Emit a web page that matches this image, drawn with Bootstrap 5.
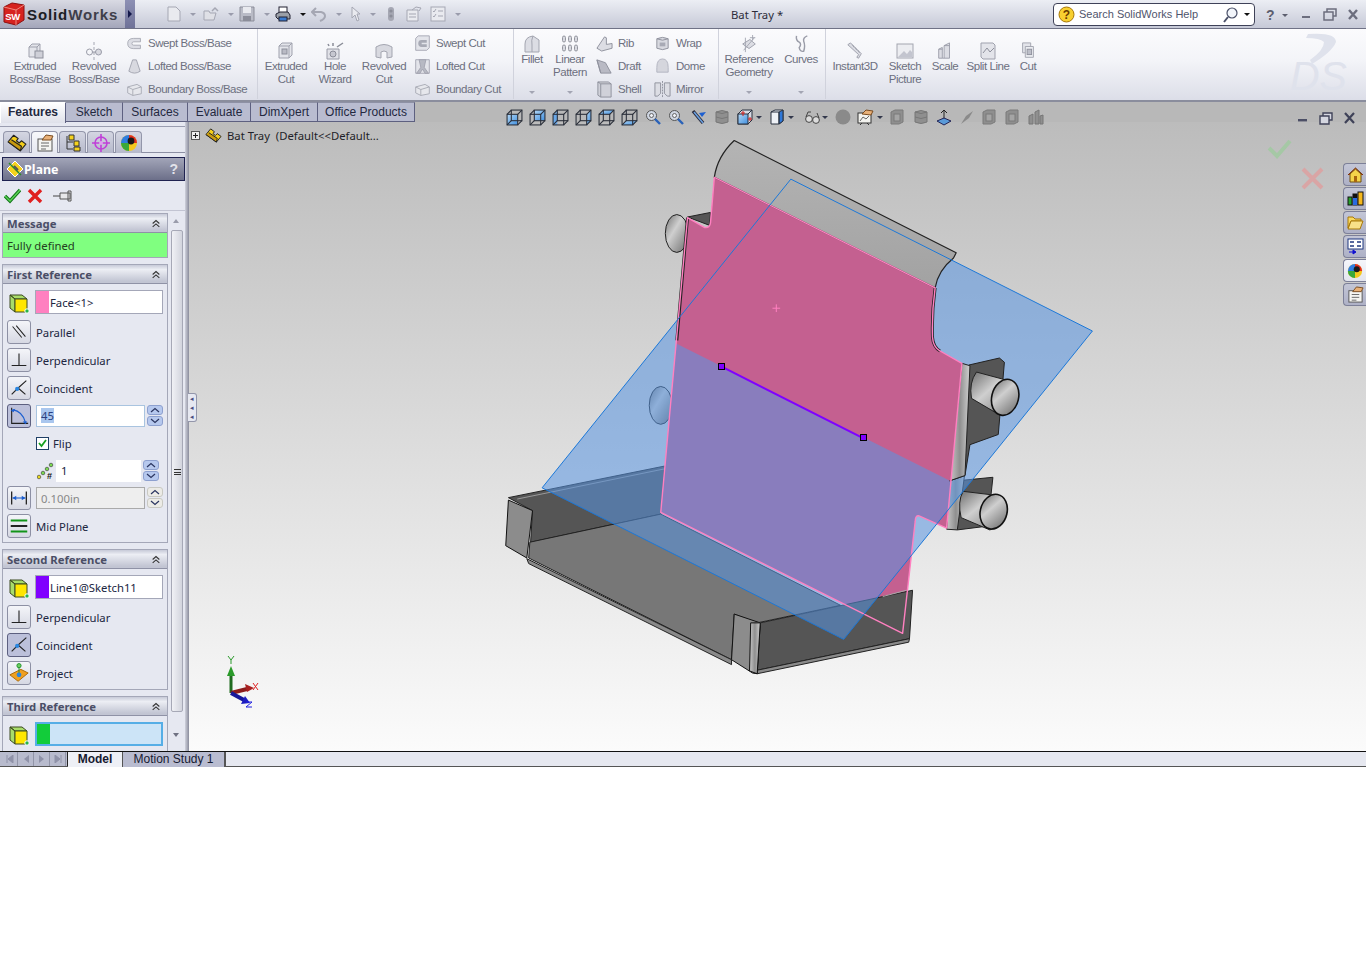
<!DOCTYPE html>
<html lang="en">
<head>
<meta charset="UTF-8">
<title>SolidWorks - Bat Tray</title>
<link href="https://cdn.jsdelivr.net/npm/bootstrap@5.3.3/dist/css/bootstrap.min.css" rel="stylesheet">
<style>
  body { background: #fff; font-family: "Noto Sans", "Liberation Sans", sans-serif; font-size: 11.3px; line-height: 13px; color: #20263f; overflow: hidden; }
  .sw-app { width: 1366px; height: 767px; overflow: hidden; }

  /* title bar */
  .sw-title { height: 29px; background: linear-gradient(#eceef4, #c6c9d7); border-bottom: 1px solid #6f7286; }
  .sw-logo { width: 125px; background: linear-gradient(#d9dae3, #a4a6ba); padding-left: 3px; }
  .sw-logo-txt { font-family: "Liberation Sans", sans-serif; font-weight: 700; font-size: 15px; letter-spacing: .9px; color: #1c1c24; margin-left: 2px; }
  .sw-logo-txt span { color: #3e3e4a; }
  .sw-arrow { width: 10px; background: linear-gradient(#8d90b4, #6f7298); color: #14184a; }
  .qa-bar { margin-left: 32px; }
  .qa-item { width: 36px; }
  .qa-gap { width: 23px; padding-left: 4px; }
  .qa-caret { width: 0; height: 0; border-left: 3px solid transparent; border-right: 3px solid transparent; border-top: 3px solid #9a9cac; margin-left: 9px; }
  .qa-caret.on { border-top-color: #111; }
  .doc-name { position: absolute; left: 731px; top: 8px; color: #2c2c3a; }
  .help-box { position: absolute; left: 1053px; top: 3px; width: 202px; height: 23px; background: #fff; border: 1px solid #3f4258; border-radius: 4px; color: #50556c; padding-left: 4px; font-family: "Liberation Sans", sans-serif; font-size: 11px; }
  .win-ctl { position: absolute; top: 0; height: 28px; }

  /* ribbon */
  .sw-ribbon { height: 73px; background: linear-gradient(#fbfbfd, #f3f4f8 45%, #dcdee8); border-bottom: 2px solid #8a8d9d; color: #6d7080; font-family: "Liberation Sans", sans-serif; font-size: 11.5px; letter-spacing: -.45px; }
  .rb-group { height: 70px; border-right: 1px solid #d0d2dc; }
  .rb-big { height: 70px; text-align: center; padding-top: 13px; }
  .rb-big svg { display: block; margin: 0 auto; }
  .rb-big.up { padding-top: 6px; }
  .rb-caret { position: absolute; bottom: 5px; left: 50%; margin-left: -3px; width: 0; height: 0; border-left: 3px solid transparent; border-right: 3px solid transparent; border-top: 3px solid #a3a5b3; }
  .rb-col { padding-top: 3px; }
  .rb-small { height: 23px; flex: none; white-space: nowrap; }
  .rb-small svg { margin-right: 5px; flex: none; }
  .ds-mark { position: absolute; left: 1270px; top: 1px; }

  /* tabs */
  .sw-work { height: 649px; }
  .cm-tabs { height: 20px; background: #b8b8b8; }
  .cm-tab { height: 20px; font-family: "Liberation Sans", sans-serif; font-size: 12px; background: #b9bcd0; color: #23283f; border: 1px solid #5d6080; border-left: 0; border-top-color: #8e91a5; text-align: center; line-height: 18px; }
  .cm-tab.active { background: linear-gradient(#fff, #dfe1ea); font-weight: 700; border: 1px solid #fff; border-right: 1px solid #5d6080; border-bottom: 0; height: 21px; position: relative; z-index: 2; }
  .view-tb { position: absolute; left: 503px; top: 7px; height: 16px; z-index: 3; }
  .vt { width: 23px; height: 16px; }
  .vt-c { width: 9px; height: 16px; }
  .vt-c i { display: block; width: 0; height: 0; border-left: 3px solid transparent; border-right: 3px solid transparent; border-top: 3px solid #33384c; }
  .gfx-ctl { position: absolute; left: 1296px; top: 8px; z-index: 3; }

  /* left panel */
  .sw-main { height: 629px; }
  .pm-panel { width: 185px; height: 629px; background: #e6e8f1; overflow: hidden; }
  .pm-split { width: 4px; background: linear-gradient(90deg, #cfd1dc, #8a8c9c); }
  .pm-tabs { height: 27px; padding: 4px 0 0 3px; border-top: 1px solid #9a9db0; margin-top: 4px; border-bottom: 1px solid #8c8fa4; }
  .pm-tab { width: 27px; height: 22px; margin-right: 1px; background: linear-gradient(#d4d6e2, #b6b9cb); border: 1px solid #9396aa; border-bottom: 0; border-radius: 4px 4px 0 0; }
  .pm-tab.active { background: linear-gradient(#f7f8fb, #e6e8f1); }
  .pm-head { height: 24px; margin: 4px 0 0 2px; background: linear-gradient(#a2a5b8, #6c6f89); border: 1px solid #1f2250; color: #fff; font-weight: 700; font-size: 12.5px; padding: 0 6px 0 3px; }
  .pm-help { font-size: 14px; color: #e2e3ea; font-family: "Liberation Sans", sans-serif; }
  .pm-actions { height: 30px; padding-left: 4px; border-bottom: 1px solid #c2c4d2; }
  .pm-actions svg { margin-right: 6px; }
  .pm-body { height: 541px; }
  .pm-col { width: 168px; padding: 2px 0 0 2px; }
  .pm-sec { border: 1px solid #a4a7b8; border-top: 0; margin-bottom: 6px; }
  .pm-sec-h { height: 20px; background: linear-gradient(#c7cad8, #eceef4 25%, #c2c5d3 90%); border-top: 1px solid #a4a7b8; border-bottom: 1px solid #8f92a6; color: #4a4e66; font-weight: 700; font-size: 11.3px; padding: 0 6px 0 4px; }
  .pm-msg { height: 24px; background: #80ff80; color: #24401f; padding-left: 4px; }
  .sel-row { height: 24px; margin: 6px 4px; }
  .sel-box { width: 128px; height: 24px; margin-left: 4px; background: #fff; border: 1px solid #a4a7b8; }
  .sel-box.on { background: #cce4f7; border: 2px solid #56aee6; }
  .sel-sw { width: 13px; height: 100%; }
  .opt-row { height: 24px; margin: 0 4px 4px 4px; }
  .flip-row { height: 28px; padding: 0 0 6px 33px; }
  .sq-btn { width: 24px; height: 24px; background: linear-gradient(#f4f5f9, #d6d8e3); border: 1px solid #8d90a4; border-radius: 3px; margin-right: 5px; flex: none; }
  .sq-btn.on { background: #bcc0da; border-color: #5d6080; }
  .num-box { height: 22px; width: 109px; margin-left: 0; padding: 0 4px; border: 1px solid #a9c4e0; border-radius: 0; font-size: 11.3px; line-height: 20px; color: #20263f; background: #fff; }
  .num-box:disabled { background: #eeeeee; border-color: #aaa; color: #888; }
  .num-sel { background: #a9c6ee; color: #2a3f80; }
  .spin { width: 16px; margin-left: 2px; }
  .spin b { display: block; height: 10px; margin-bottom: 1px; background: #b6c8ee; border: 1px solid #8da0cf; border-radius: 3px; }
  .spin.off b { background: #ecebe6; border-color: #c9c9c2; }
  .pm-scroll { width: 15px; height: 533px; margin: 2px 0 0 2px; }
  .sc-thumb { position: absolute; left: 1px; right: 2px; top: 17px; height: 482px; background: linear-gradient(90deg, #f0f1f5, #d2d4dd); border: 1px solid #a6a8b6; border-radius: 2px; }
  .sc-grip { position: absolute; left: 2px; top: 238px; width: 7px; height: 6px; border-top: 1px solid #333; border-bottom: 1px solid #333; }
  .sc-grip::after { content: ""; display: block; height: 1px; margin-top: 2px; background: #333; }
  .sc-a { position: absolute; left: 3px; width: 0; height: 0; border-left: 3px solid transparent; border-right: 3px solid transparent; }
  .split-tab { position: absolute; left: 188px; top: 291px; width: 9px; height: 29px; background: #e6e8f1; border: 1px solid #9396aa; border-left: 0; border-radius: 0 3px 3px 0; color: #4a4e80; font-size: 7px; line-height: 9px; text-align: center; z-index: 3; }

  /* graphics area */
  .gfx { background: linear-gradient(#bcbcbc, #fbfbfb); overflow: hidden; }
  .gfx-svg { position: absolute; left: 0; top: 0; }
  .mdl * { vector-effect: non-scaling-stroke; }
  .tree-row { position: absolute; left: 2px; top: 5px; color: #1e1e28; }
  .plus-box { width: 9px; height: 9px; border: 1px solid #555; background: #eee; margin-right: 5px; position: relative; }
  .plus-box::before { content: ""; position: absolute; left: 1px; right: 1px; top: 3px; height: 1px; background: #222; }
  .plus-box::after { content: ""; position: absolute; top: 1px; bottom: 1px; left: 3px; width: 1px; background: #222; }
  .tree-txt { margin-left: 1px; }
  .task-tabs { position: absolute; right: 0; top: 41px; width: 23px; }
  .task-tab { width: 23px; height: 23px; margin-bottom: 1px; background: linear-gradient(#c3c6d6, #aeb1c6); border: 1px solid #7d8098; border-right: 0; border-radius: 4px 0 0 4px; }
  .task-tab.active { background: linear-gradient(#f5f6fa, #e3e5ee); }

  /* bottom tabs */
  .sw-bottom { height: 16px; background: #e6e8f0; border-top: 1px solid #111; border-bottom: 1px solid #555; font-family: "Liberation Sans", sans-serif; font-size: 12px; line-height: 14px; color: #161a30; }
  .nav-arrows { width: 68px; padding-left: 2px; background: #b8bbcd; border-right: 1px solid #222; }
  .nav-arrows span { width: 16px; height: 14px; background: #b8bbcd; border-right: 1px solid #9295a8; }
  .bt-tab { height: 15px; text-align: center; border-right: 1px solid #555; }
  .bt-tab.active { width: 55px; background: #eef0f6; font-weight: 700; }
  .bt-tab.off { width: 103px; background: #b9bcd0; border-right: 2px solid #555; }
</style>
</head>
<body>

<svg width="0" height="0" class="position-absolute">
  <defs>
    <linearGradient id="gPeg" x1="0" y1="0" x2="1" y2="1"><stop offset="0" stop-color="#6f6f6f"/><stop offset=".4" stop-color="#cfcfcf"/><stop offset="1" stop-color="#6a6a6a"/></linearGradient>
    <linearGradient id="gTop" x1="0" y1="0" x2="0" y2="1"><stop offset="0" stop-color="#b4b4b4"/><stop offset="1" stop-color="#a2a2a2"/></linearGradient>
    <linearGradient id="gStrip" x1="0" y1="0" x2="1" y2="0"><stop offset="0" stop-color="#c8c8c8"/><stop offset=".5" stop-color="#8f8f8f"/><stop offset="1" stop-color="#d0d0d0"/></linearGradient>
    <linearGradient id="gBlue" x1="0" y1="0" x2="1" y2="1"><stop offset="0" stop-color="#b5d8f5"/><stop offset="1" stop-color="#3f8fe0"/></linearGradient>
    <clipPath id="clipUp"><path d="M0,357 L1600,1232 L1600,0 L0,0 Z"/></clipPath>

    <!-- ribbon icons, disabled grey -->
    <g id="ic-box"><path d="M3 5 L6 2 H14 V12 L11 15 H3 Z" fill="#e3e4ea" stroke="#9fa1ad"/><path d="M3 5 H11 V15 M11 5 L14 2" fill="none" stroke="#9fa1ad"/></g>
    <symbol id="i-extr" viewBox="0 0 18 18"><use href="#ic-box"/><rect x="9" y="9" width="8" height="7" fill="#cfd0d8" stroke="#8e909c"/></symbol>
    <symbol id="i-rev" viewBox="0 0 18 18"><path d="M9 0 V18" stroke="#a5a7b2" stroke-dasharray="3 2"/><circle cx="4.5" cy="10" r="3" fill="none" stroke="#9a9ca8"/><circle cx="13.5" cy="10" r="3" fill="#d8d9e0" stroke="#9a9ca8"/><path d="M7 10 H11" stroke="#9a9ca8"/></symbol>
    <symbol id="i-swept" viewBox="0 0 20 18"><path d="M17 3 H9 Q2 3 2 9 Q2 15 9 15 H17 V11 H9 Q7 11 7 9 Q7 7 9 7 H17 Z" fill="#dcdde4" stroke="#a3a5b0"/></symbol>
    <symbol id="i-loft" viewBox="0 0 18 18"><path d="M7 2 H11 L15 14 Q9 18 3 14 Z" fill="#d8d9e0" stroke="#a3a5b0"/></symbol>
    <symbol id="i-bound" viewBox="0 0 20 18"><path d="M2 6 L13 3 L18 6 V14 L8 16 L2 13 Z" fill="#e6e7ec" stroke="#a3a5b0"/><path d="M2 6 L8 9 L18 6 M8 9 V16" fill="none" stroke="#a3a5b0"/></symbol>
    <symbol id="i-excut" viewBox="0 0 18 18"><path d="M2 4 L5 1 H15 V13 L12 16 H2 Z" fill="#e3e4ea" stroke="#9fa1ad"/><path d="M2 4 H12 V16 M12 4 L15 1" fill="none" stroke="#9fa1ad"/><rect x="5" y="7" width="5" height="5" fill="#b9bac4" stroke="#8e909c"/></symbol>
    <symbol id="i-hole" viewBox="0 0 18 18"><path d="M1 7 H13 V17 H1 Z" fill="#e0e1e7" stroke="#9a9ca8"/><circle cx="7" cy="12" r="3" fill="#c6c7d0" stroke="#8a8c98"/><path d="M2 2 L3 4 M7 1 V4 M11 5 L17 1" stroke="#8a8c98" stroke-width="1.5"/></symbol>
    <symbol id="i-revcut" viewBox="0 0 18 18"><path d="M1 5 Q9 0 17 5 V15 L12 16 V10 Q9 8 6 10 V16 L1 15 Z" fill="#d8d9e0" stroke="#a3a5b0"/></symbol>
    <symbol id="i-swcut" viewBox="0 0 20 20"><path d="M2 4 L5 1 H18 V15 L15 18 H2 Z" fill="#e3e4ea" stroke="#9fa1ad"/><path d="M15 6 H9 Q5 6 5 10 Q5 14 9 14 H15 V11 H9 V9 H15 Z" fill="#a8aab5"/></symbol>
    <symbol id="i-lofcut" viewBox="0 0 20 20"><path d="M2 2 H18 V18 H2 Z" fill="#e3e4ea" stroke="#9fa1ad"/><path d="M6 2 H14 L12 11 L17 18 H13 L10 13 L7 18 H3 L8 11 Z" fill="#b7b9c3" stroke="#9fa1ad"/></symbol>
    <symbol id="i-fillet" viewBox="0 0 18 18"><path d="M2 17 V9 Q2 2 10 1 L16 5 V17 Z" fill="#dcdde4" stroke="#a3a5b0"/><path d="M10 1 Q8 5 9 10 V17" fill="none" stroke="#a3a5b0"/></symbol>
    <symbol id="i-lpat" viewBox="0 0 18 18"><g fill="#d8d9e0" stroke="#94969f"><rect x="1.5" y="1" width="3" height="6" rx="1.5"/><rect x="7.5" y="1" width="3" height="6" rx="1.5"/><rect x="13.5" y="1" width="3" height="6" rx="1.5"/><rect x="1.5" y="10" width="3" height="6" rx="1.5"/><rect x="7.5" y="10" width="3" height="6" rx="1.5"/><rect x="13.5" y="10" width="3" height="6" rx="1.5"/></g></symbol>
    <symbol id="i-rib" viewBox="0 0 18 18"><path d="M1 14 L9 2 L11 3 V10 L17 9 V14 L6 17 Z" fill="#dcdde4" stroke="#8e909c"/></symbol>
    <symbol id="i-wrap" viewBox="0 0 18 18"><path d="M3 4 Q9 1 15 4 V14 Q9 17 3 14 Z" fill="#d8d9e0" stroke="#8e909c"/><path d="M3 4 Q9 7 15 4" fill="none" stroke="#8e909c"/><rect x="6" y="8" width="6" height="4" fill="#a8aab5"/></symbol>
    <symbol id="i-draft" viewBox="0 0 18 18"><path d="M1 2 L10 5 L16 16 H5 Z" fill="#b9bac4" stroke="#8e909c"/><path d="M1 2 L5 16" stroke="#8e909c"/></symbol>
    <symbol id="i-dome" viewBox="0 0 18 18"><path d="M3 10 Q3 1 9 1 Q15 1 15 10 V15 H3 Z" fill="#d5d6dd" stroke="#b3b5c0"/></symbol>
    <symbol id="i-shell" viewBox="0 0 18 18"><path d="M2 1 H13 L16 3 V17 H5 L2 15 Z" fill="#d0d1d9" stroke="#8e909c"/><path d="M5 3 H16 M5 3 V17 M2 1 L5 3" fill="none" stroke="#8e909c"/></symbol>
    <symbol id="i-mirror" viewBox="0 0 18 18"><path d="M1 2 H7 V13 L4 16 H1 Z M17 2 H11 V13 L14 16 H17 Z" fill="#dcdde4" stroke="#8e909c"/><path d="M9 0 V18" stroke="#8e909c" stroke-dasharray="2 1"/></symbol>
    <symbol id="i-ref" viewBox="0 0 18 20"><path d="M2 10 L10 5 L16 10 L9 15 Z" fill="#dcdde4" stroke="#9a9ca8"/><path d="M3 17 L15 3 M13 0 V6 M10 3 H16 M5 3 V19" stroke="#a3a5b0" fill="none"/></symbol>
    <symbol id="i-curves" viewBox="0 0 18 20"><path d="M4 1 Q3 6 7 8 Q10 10 7 14 Q8 19 12 18 Q14 12 12 7 Q11 3 16 1" fill="none" stroke="#9a9ca8" stroke-width="1.6"/></symbol>
    <symbol id="i-i3d" viewBox="0 0 18 20"><path d="M1 3 L4 1 L16 13 L13 18 L11 17 L13 14 Z" fill="#dcdde4" stroke="#9a9ca8"/><path d="M6 3 L8 6 M9 6 L11 9 M12 9 L14 12" stroke="#9a9ca8"/></symbol>
    <symbol id="i-pic" viewBox="0 0 18 18"><rect x="1" y="2" width="16" height="14" fill="#ecedf1" stroke="#a3a5b0"/><path d="M2 15 L8 9 L11 12 L14 8 L16 10 V15 Z" fill="#c3c5cf"/></symbol>
    <symbol id="i-scale" viewBox="0 0 18 20"><path d="M2 8 L6 6 V18 H2 Z M8 4 L14 1 V18 H8 Z" fill="#dcdde4" stroke="#9a9ca8"/><path d="M6 18 H8 M2 8 H6 M8 4 H14" stroke="#9a9ca8"/></symbol>
    <symbol id="i-split" viewBox="0 0 18 18"><path d="M2 1 H14 L16 3 V17 H4 L2 15 Z" fill="#e3e4ea" stroke="#9fa1ad"/><path d="M4 11 L8 6 L11 10 L15 6" fill="none" stroke="#8e909c"/></symbol>
    <symbol id="i-cut" viewBox="0 0 18 20"><path d="M3 1 H12 V12 H3 Z" fill="#e3e4ea" stroke="#9fa1ad"/><path d="M6 5 H15 V17 H6 Z" fill="#eceef2" stroke="#9fa1ad"/><rect x="8" y="8" width="5" height="6" fill="#bcbec8" stroke="#8e909c"/></symbol>

    <!-- view toolbar: wire cube with one blue face -->
    <g id="v-wire" fill="none" stroke="#2a2f3a"><rect x="1" y="5" width="10" height="10"/><rect x="5" y="1" width="10" height="10"/><path d="M1 5 L5 1 M11 5 L15 1 M11 15 L15 11 M1 15 L5 11"/></g>
    <symbol id="v-front" viewBox="0 0 16 16"><rect x="1" y="5" width="10" height="10" fill="url(#gBlue)"/><use href="#v-wire"/></symbol>
    <symbol id="v-back" viewBox="0 0 16 16"><rect x="5" y="1" width="10" height="10" fill="url(#gBlue)"/><use href="#v-wire"/></symbol>
    <symbol id="v-left" viewBox="0 0 16 16"><path d="M1 5 L5 1 V11 L1 15 Z" fill="url(#gBlue)"/><rect x="1" y="5" width="4" height="10" fill="#6aa8e8"/><use href="#v-wire"/></symbol>
    <symbol id="v-right" viewBox="0 0 16 16"><path d="M11 5 L15 1 V11 L11 15 Z" fill="url(#gBlue)"/><use href="#v-wire"/></symbol>
    <symbol id="v-top" viewBox="0 0 16 16"><path d="M1 5 L5 1 H15 L11 5 Z" fill="url(#gBlue)"/><use href="#v-wire"/></symbol>
    <symbol id="v-bot" viewBox="0 0 16 16"><path d="M1 15 L5 11 H15 L11 15 Z" fill="url(#gBlue)"/><use href="#v-wire"/></symbol>
    <symbol id="v-zoom" viewBox="0 0 16 16"><circle cx="6.5" cy="6.5" r="5" fill="#cfd6e2" stroke="#555"/><circle cx="6.5" cy="6.5" r="2" fill="#eef1f6" stroke="#666"/><path d="M10 10 L15 15" stroke="#2a62b8" stroke-width="2.4"/></symbol>
    <symbol id="v-grey" viewBox="0 0 16 16"><path d="M1 3 L5 1 H13 V13 L9 15 H1 Z" fill="#8f8f8f" stroke="#7a7a7a"/><rect x="4" y="5" width="6" height="7" fill="#a5a5a5" stroke="#7a7a7a"/></symbol>
    <symbol id="v-cyl" viewBox="0 0 16 16"><path d="M2 3 Q8 0 14 3 V13 Q8 16 2 13 Z" fill="#8f8f8f" stroke="#777"/><path d="M2 3 Q8 6 14 3 M2 8 Q8 11 14 8" fill="none" stroke="#777"/></symbol>
    <symbol id="v-stack" viewBox="0 0 16 16"><path d="M1 7 L5 5 V15 H1 Z M7 3 L11 1 V15 H7 Z M12 7 L15 6 V15 H12 Z" fill="#8f8f8f" stroke="#777"/></symbol>

    <!-- property manager -->
    <symbol id="p-sel" viewBox="0 0 24 24"><path d="M3 5 H15 L20 9 H8 Z M3 5 L8 9 V22 L3 18 Z" fill="#a8dc6a" stroke="#3c4a20"/><path d="M8 9 H20 V22 H8 Z" fill="#ffe600" stroke="#3c4a20"/><circle cx="20" cy="21" r="2.2" fill="#27b34a" stroke="#fff"/></symbol>
    <symbol id="p-par" viewBox="0 0 24 24"><path d="M5 6 L15 18 M9 5 L19 17" stroke="#222" stroke-width="1.1"/></symbol>
    <symbol id="p-perp" viewBox="0 0 24 24"><path d="M12 5 V18 M4 18 H20" stroke="#222" stroke-width="1.2"/></symbol>
    <symbol id="p-coin" viewBox="0 0 24 24"><path d="M4 19 L11 12 M11 12 L20 4 M11 12 L19 19" stroke="#222" stroke-width="1.2" fill="none"/><circle cx="10" cy="13" r="2.3" fill="#2a86e0"/></symbol>
    <symbol id="p-ang" viewBox="0 0 24 24"><path d="M4 3 V20 H22" stroke="#222" fill="none" stroke-width="1.2"/><path d="M5 5 Q16 7 19 19" stroke="#1d5fd0" fill="none" stroke-width="1.3"/><path d="M3 6 L8 4 L6 8 Z M16 18 H21 L19 21 Z" fill="#1d5fd0"/></symbol>
    <symbol id="p-dist" viewBox="0 0 24 24"><path d="M4 5 V19 M20 5 V19" stroke="#222" stroke-width="1.4"/><path d="M5 12 H19" stroke="#1d5fd0" stroke-width="1.2"/><path d="M5 12 L9 9.5 V14.5 Z M19 12 L15 9.5 V14.5 Z" fill="#1d5fd0"/></symbol>
    <symbol id="p-mid" viewBox="0 0 24 24"><path d="M3 6 H21 M3 18 H21" stroke="#119419" stroke-width="2"/><path d="M3 12 H21" stroke="#111" stroke-width="2"/></symbol>
    <symbol id="p-proj" viewBox="0 0 24 24"><path d="M2 14 L14 8 L22 12 L11 21 Z" fill="#f0a020" stroke="#a86808"/><path d="M12 3 V14" stroke="#1d8f2a"/><circle cx="12" cy="4" r="2.3" fill="#6cd060" stroke="#1d8f2a"/><circle cx="12" cy="14" r="2.6" fill="#2a86e0"/></symbol>
    <symbol id="p-up" viewBox="0 0 12 10"><path d="M2 5 L6 1.5 L10 5 M2 9 L6 5.5 L10 9" fill="none" stroke="#333" stroke-width="1.3"/></symbol>
    <symbol id="p-spin-up" viewBox="0 0 12 6"><path d="M2 5 L6 1.5 L10 5" fill="none" stroke="#2a3560" stroke-width="1.2"/></symbol>
    <symbol id="p-spin-dn" viewBox="0 0 12 6"><path d="M2 1 L6 4.5 L10 1" fill="none" stroke="#2a3560" stroke-width="1.2"/></symbol>
    <symbol id="t-part" viewBox="0 0 18 18"><path d="M1 8 L6 2 L10 5 L8.5 7 L11 9 L13 7 L17 10 L12 16 Z" fill="#f5cf1a" stroke="#222" stroke-linejoin="round"/><path d="M1 8 L12 16 L13 12 L4 6" fill="#c89a10" stroke="#222" stroke-linejoin="round"/></symbol>
    <symbol id="t-prop" viewBox="0 0 18 18"><rect x="2" y="5" width="14" height="12" fill="#f5f5f2" stroke="#555"/><path d="M5 9 H13 M5 12 H13 M5 15 H10" stroke="#666"/><path d="M6 6 L10 1 L17 2 L15 6 Z" fill="#e8b078" stroke="#7a4c20"/></symbol>
    <symbol id="t-conf" viewBox="0 0 18 18"><path d="M3 2 V15 H9 M3 8 H9" stroke="#333" fill="none"/><path d="M5 1 H10 V6 H5 Z M10 7 H15 V12 H10 Z M10 13 H16 V17 H10 Z" fill="#f5d21e" stroke="#333"/></symbol>
    <symbol id="t-dim" viewBox="0 0 18 18"><circle cx="9" cy="9" r="6" fill="none" stroke="#c040d8" stroke-width="1.6"/><path d="M9 0 V18 M0 9 H18" stroke="#c040d8" stroke-width="1.6"/><circle cx="9" cy="9" r="2" fill="#e0a0f0"/></symbol>
    <symbol id="t-disp" viewBox="0 0 18 18"><circle cx="9" cy="9" r="8" fill="#f4c81e"/><path d="M9 9 V1 A8 8 0 0 0 1 9 Z" fill="#2f7de0"/><path d="M9 9 V1 A8 8 0 0 1 17 9 Z" fill="#e02d20"/><path d="M1 9 A8 8 0 0 0 9 17 V9 Z" fill="#3aa83a"/><circle cx="11" cy="7" r="3.4" fill="#1a1a1a"/></symbol>
  </defs>
</svg>

<div class="sw-app d-flex flex-column position-relative">

  <!-- title bar -->
  <div class="sw-title d-flex flex-none position-relative">
    <div class="sw-logo d-flex align-items-center">
      <svg width="22" height="24" viewBox="0 0 22 24"><path d="M1 5 L9 1 L21 3 V18 L13 23 L1 20 Z" fill="#d6231f" stroke="#8e1010"/><path d="M1 5 L13 8 L21 3 M13 8 V23" fill="none" stroke="#f08a80"/><text x="9.5" y="18" text-anchor="middle" font-family="Liberation Sans" font-weight="700" font-size="9.5" fill="#fff" letter-spacing="-.3">SW</text></svg>
      <span class="sw-logo-txt">Solid<span>Works</span></span>
    </div>
    <div class="sw-arrow d-flex align-items-center justify-content-center">
      <svg width="6" height="8" viewBox="0 0 6 8"><path d="M1 0 L5 4 L1 8 Z" fill="#14184a"/></svg>
    </div>
    <div class="qa-bar d-flex align-items-center">
      <div class="qa-item d-flex align-items-center"><svg width="14" height="16" viewBox="0 0 14 16"><path d="M1 1 H9 L13 5 V15 H1 Z" fill="#e9eaef" stroke="#a5a7b3"/></svg><i class="qa-caret"></i></div>
      <div class="qa-item d-flex align-items-center"><svg width="16" height="16" viewBox="0 0 16 16"><path d="M1 5 H6 L7 7 H13 L11 14 H1 Z" fill="#dfe0e6" stroke="#a5a7b3"/><path d="M9 5 L12 2 L15 5" fill="none" stroke="#a5a7b3" stroke-width="1.5"/></svg><i class="qa-caret"></i></div>
      <div class="qa-item d-flex align-items-center"><svg width="16" height="16" viewBox="0 0 16 16"><path d="M1 1 H15 V15 H1 Z" fill="#b9bbc6" stroke="#8b8d99"/><rect x="4" y="1" width="8" height="6" fill="#e9eaef"/><rect x="4" y="10" width="8" height="5" fill="#8b8d99"/></svg><i class="qa-caret"></i></div>
      <div class="qa-item d-flex align-items-center"><svg width="16" height="16" viewBox="0 0 16 16"><rect x="4" y="1" width="8" height="7" fill="#fff" stroke="#223"/><path d="M1 8 L5 6 H13 L15 9 V13 H3 L1 11 Z" fill="#9ba0a8" stroke="#223"/><rect x="4" y="11" width="8" height="4" fill="#3a7bd0" stroke="#223"/></svg><i class="qa-caret on"></i></div>
      <div class="qa-item d-flex align-items-center"><svg width="16" height="16" viewBox="0 0 16 16"><path d="M5 2 L1 6 L5 10 M1 6 H10 Q14 7 14 10 Q14 13 9 15" fill="none" stroke="#a5a7b3" stroke-width="2"/></svg><i class="qa-caret"></i></div>
      <div class="qa-item d-flex align-items-center ps-1"><svg width="10" height="16" viewBox="0 0 10 16"><path d="M1 1 V12 L4 9 L6 15 L8 14 L6 8 H9 Z" fill="#e9eaef" stroke="#a5a7b3"/></svg><i class="qa-caret"></i></div>
      <div class="qa-gap d-flex align-items-center"><svg width="8" height="16" viewBox="0 0 8 16"><rect x="1" y="1" width="6" height="14" rx="3" fill="#a5a7b3"/><circle cx="4" cy="5" r="1.6" fill="#8b8d99"/><circle cx="4" cy="10" r="1.6" fill="#8b8d99"/></svg></div>
      <div class="d-flex align-items-center pe-2"><svg width="16" height="16" viewBox="0 0 16 16"><path d="M1 4 H12 V15 H1 Z" fill="#e9eaef" stroke="#a5a7b3"/><path d="M3 8 H10 M3 11 H10 M6 4 L10 1 L15 2 L13 5" fill="none" stroke="#a5a7b3"/></svg></div>
      <div class="d-flex align-items-center"><svg width="16" height="16" viewBox="0 0 16 16"><rect x="1" y="1" width="14" height="14" fill="#e9eaef" stroke="#a5a7b3"/><path d="M3 5 L4 6 L6 3 M3 10 L4 11 L6 8 M8 5 H13 M8 10 H13" fill="none" stroke="#a5a7b3"/></svg><i class="qa-caret"></i></div>
    </div>
    <span class="doc-name">Bat Tray *</span>
    <div class="help-box d-flex align-items-center">
      <svg width="17" height="17" viewBox="0 0 17 17"><circle cx="8.5" cy="8.5" r="7.5" fill="#f8d030" stroke="#a87808"/><text x="8.5" y="13" text-anchor="middle" font-family="Liberation Sans" font-weight="700" font-size="12" fill="#6a3a00">?</text></svg>
      <span class="ms-1 flex-grow-1">Search SolidWorks Help</span>
      <svg width="18" height="18" viewBox="0 0 18 18"><circle cx="10" cy="7" r="5" fill="#f2f5fa" stroke="#4a5068" stroke-width="1.2"/><path d="M6 11 L2 16" stroke="#4a5068" stroke-width="2"/></svg>
      <i class="qa-caret on ms-1 me-1"></i>
    </div>
    <svg class="win-ctl" style="left:1262px" width="100" height="28" viewBox="0 0 100 28">
      <text x="4" y="20" font-family="Liberation Sans" font-weight="700" font-size="14" fill="#5c5e6e">?</text>
      <path d="M20 14 L26 14 L23 17 Z" fill="#5c5e6e"/>
      <rect x="40" y="16" width="8" height="2" fill="#6c6e7e"/>
      <path d="M62 12 H71 V20 H62 Z M65 12 V9 H74 V16 H71" fill="none" stroke="#6c6e7e" stroke-width="1.5"/>
      <path d="M87 10 L95 19 M95 10 L87 19" stroke="#6c6e7e" stroke-width="2.4"/>
    </svg>
  </div>

  <!-- command ribbon -->
  <div class="sw-ribbon d-flex position-relative">
    <div class="rb-group d-flex" style="width:258px;padding-left:6px">
      <div class="rb-big" style="width:58px"><svg width="18" height="18"><use href="#i-extr"/></svg>Extruded<br>Boss/Base</div>
      <div class="rb-big" style="width:60px"><svg width="18" height="18"><use href="#i-rev"/></svg>Revolved<br>Boss/Base</div>
      <div class="rb-col d-flex flex-column" style="padding-left:2px">
        <div class="rb-small d-flex align-items-center"><svg width="17" height="17"><use href="#i-swept"/></svg>Swept Boss/Base</div>
        <div class="rb-small d-flex align-items-center"><svg width="17" height="17"><use href="#i-loft"/></svg>Lofted Boss/Base</div>
        <div class="rb-small d-flex align-items-center"><svg width="17" height="17"><use href="#i-bound"/></svg>Boundary Boss/Base</div>
      </div>
    </div>
    <div class="rb-group d-flex" style="width:256px">
      <div class="rb-big" style="width:56px"><svg width="18" height="18"><use href="#i-excut"/></svg>Extruded<br>Cut</div>
      <div class="rb-big" style="width:42px"><svg width="18" height="18"><use href="#i-hole"/></svg>Hole<br>Wizard</div>
      <div class="rb-big" style="width:56px"><svg width="18" height="18"><use href="#i-revcut"/></svg>Revolved<br>Cut</div>
      <div class="rb-col d-flex flex-column" style="padding-left:2px">
        <div class="rb-small d-flex align-items-center"><svg width="17" height="17"><use href="#i-swcut"/></svg>Swept Cut</div>
        <div class="rb-small d-flex align-items-center"><svg width="17" height="17"><use href="#i-lofcut"/></svg>Lofted Cut</div>
        <div class="rb-small d-flex align-items-center"><svg width="17" height="17"><use href="#i-bound"/></svg>Boundary Cut</div>
      </div>
    </div>
    <div class="rb-group d-flex" style="width:205px">
      <div class="rb-big up position-relative" style="width:36px"><svg width="18" height="18"><use href="#i-fillet"/></svg>Fillet<i class="rb-caret"></i></div>
      <div class="rb-big up position-relative" style="width:40px"><svg width="18" height="18"><use href="#i-lpat"/></svg>Linear<br>Pattern<i class="rb-caret"></i></div>
      <div class="rb-col d-flex flex-column" style="width:64px;padding-left:6px">
        <div class="rb-small d-flex align-items-center"><svg width="17" height="17"><use href="#i-rib"/></svg>Rib</div>
        <div class="rb-small d-flex align-items-center"><svg width="17" height="17"><use href="#i-draft"/></svg>Draft</div>
        <div class="rb-small d-flex align-items-center"><svg width="17" height="17"><use href="#i-shell"/></svg>Shell</div>
      </div>
      <div class="rb-col d-flex flex-column">
        <div class="rb-small d-flex align-items-center"><svg width="17" height="17"><use href="#i-wrap"/></svg>Wrap</div>
        <div class="rb-small d-flex align-items-center"><svg width="17" height="17"><use href="#i-dome"/></svg>Dome</div>
        <div class="rb-small d-flex align-items-center"><svg width="17" height="17"><use href="#i-mirror"/></svg>Mirror</div>
      </div>
    </div>
    <div class="rb-group d-flex" style="width:107px">
      <div class="rb-big up position-relative" style="width:60px"><svg width="18" height="18"><use href="#i-ref"/></svg>Reference<br>Geometry<i class="rb-caret"></i></div>
      <div class="rb-big up position-relative" style="width:44px"><svg width="18" height="18"><use href="#i-curves"/></svg>Curves<i class="rb-caret"></i></div>
    </div>
    <div class="d-flex">
      <div class="rb-big" style="width:58px"><svg width="18" height="18"><use href="#i-i3d"/></svg>Instant3D</div>
      <div class="rb-big" style="width:42px"><svg width="18" height="18"><use href="#i-pic"/></svg>Sketch<br>Picture</div>
      <div class="rb-big" style="width:38px"><svg width="18" height="18"><use href="#i-scale"/></svg>Scale</div>
      <div class="rb-big text-nowrap" style="width:48px"><svg width="18" height="18"><use href="#i-split"/></svg>Split Line</div>
      <div class="rb-big" style="width:32px"><svg width="18" height="18"><use href="#i-cut"/></svg>Cut</div>
    </div>
    <svg class="ds-mark" width="96" height="70" viewBox="0 0 96 70">
      <path d="M38 4 Q66 2 66 12 Q62 22 42 34 L40 30 Q54 20 54 12 Q50 8 36 8 Z" fill="#dfe2ec"/>
      <text x="20" y="60" font-family="Liberation Sans" font-style="italic" font-size="41" letter-spacing="0" fill="#dfe2ec">DS</text>
    </svg>
  </div>

  <div class="sw-work position-relative">
    <!-- tab row -->
    <div class="cm-tabs d-flex">
      <div class="cm-tab active" style="width:66px">Features</div>
      <div class="cm-tab" style="width:57px">Sketch</div>
      <div class="cm-tab" style="width:65px">Surfaces</div>
      <div class="cm-tab" style="width:63px">Evaluate</div>
      <div class="cm-tab" style="width:67px">DimXpert</div>
      <div class="cm-tab" style="width:97px">Office Products</div>
    </div>

    <!-- heads-up view toolbar -->
    <div class="view-tb d-flex">
      <div class="vt text-center"><svg width="17" height="17"><use href="#v-front"/></svg></div>
      <div class="vt text-center"><svg width="17" height="17"><use href="#v-back"/></svg></div>
      <div class="vt text-center"><svg width="17" height="17"><use href="#v-left"/></svg></div>
      <div class="vt text-center"><svg width="17" height="17"><use href="#v-right"/></svg></div>
      <div class="vt text-center"><svg width="17" height="17"><use href="#v-top"/></svg></div>
      <div class="vt text-center"><svg width="17" height="17"><use href="#v-bot"/></svg></div>
      <div class="vt text-center"><svg width="16" height="16"><use href="#v-zoom"/></svg></div>
      <div class="vt text-center"><svg width="16" height="16"><use href="#v-zoom"/></svg></div>
      <div class="vt text-center"><svg width="16" height="16" viewBox="0 0 16 16"><path d="M2 2 L12 14" stroke="#2a2a3a" stroke-width="3.4"/><path d="M3 3 L12 14" stroke="#6aa0e0" stroke-width="1.6"/><path d="M15 3 L8 4 L11 8 Z" fill="#1d5fd0"/></svg></div>
      <div class="vt text-center"><svg width="16" height="16"><use href="#v-cyl"/></svg></div>
      <div class="vt text-center"><svg width="16" height="16" viewBox="0 0 16 16"><path d="M1 5 L5 1 H15 V11 L11 15 H1 Z" fill="#d6dae4" stroke="#28303f"/><rect x="1" y="5" width="10" height="10" fill="url(#gBlue)" stroke="#28303f"/><path d="M11 5 L15 1" stroke="#28303f"/><path d="M6 2 V7 M4 4 H8 M11 10 H15 M13 8 V12" stroke="#d02020"/></svg></div>
      <div class="vt-c d-flex align-items-center"><i></i></div>
      <div class="vt text-center"><svg width="16" height="16" viewBox="0 0 16 16"><path d="M2 3 L6 1 H14 V12 L10 15 H2 Z" fill="#eef1f6" stroke="#28303f"/><path d="M10 3 L14 1 V12 L10 15 Z" fill="#2f78d8" stroke="#28303f"/><path d="M2 3 H10 V15" fill="none" stroke="#28303f"/></svg></div>
      <div class="vt-c d-flex align-items-center"><i></i></div>
      <div class="vt text-center ms-1"><svg width="17" height="16" viewBox="0 0 17 16"><circle cx="5" cy="10" r="3.4" fill="#dcdcdc" stroke="#444"/><circle cx="12" cy="11" r="3.4" fill="#dcdcdc" stroke="#444"/><path d="M2 8 L4 3 H7 M15 9 L13 4" fill="none" stroke="#444"/></svg></div>
      <div class="vt-c d-flex align-items-center" style="margin-left:-2px"><i></i></div>
      <div class="vt text-center"><svg width="16" height="16" viewBox="0 0 16 16"><circle cx="8" cy="8" r="7.5" fill="#8a8a8a"/></svg></div>
      <div class="vt text-center"><svg width="17" height="17" viewBox="0 0 17 17"><rect x="1" y="4" width="13" height="10" fill="#f2f2ee" stroke="#333"/><path d="M3 12 L6 8 L9 10 L12 7" fill="none" stroke="#666"/><path d="M5 5 L9 1 L16 2 L14 6 Z" fill="#e8b078" stroke="#7a4c20"/><path d="M5 14 L3 16 M10 14 L12 16" stroke="#333"/></svg></div>
      <div class="vt-c d-flex align-items-center"><i></i></div>
      <div class="vt text-center"><svg width="16" height="16"><use href="#v-grey"/></svg></div>
      <div class="vt text-center"><svg width="16" height="16"><use href="#v-cyl"/></svg></div>
      <div class="vt text-center"><svg width="16" height="18" viewBox="0 0 16 18"><path d="M8 1 V11 M5 4 L8 1 L11 4" fill="none" stroke="#222"/><path d="M1 12 L8 9 L15 12 L8 16 Z" fill="#5a9ad8" stroke="#225"/></svg></div>
      <div class="vt text-center"><svg width="16" height="16" viewBox="0 0 16 16"><path d="M2 15 L7 7 L14 2 L10 9 Z" fill="#8a8a8a"/></svg></div>
      <div class="vt text-center"><svg width="16" height="16"><use href="#v-grey"/></svg></div>
      <div class="vt text-center"><svg width="16" height="16"><use href="#v-grey"/></svg></div>
      <div class="vt text-center"><svg width="16" height="16"><use href="#v-stack"/></svg></div>
    </div>
    <svg class="gfx-ctl" width="64" height="16" viewBox="0 0 64 16">
      <rect x="2" y="9" width="9" height="2.4" fill="#4c4f66"/>
      <path d="M24 6 H33 V14 H24 Z M27 6 V3 H36 V10 H33" fill="#d4d6e0" stroke="#3f4258" stroke-width="1.4"/>
      <path d="M49 3 L58 13 M58 3 L49 13" stroke="#3f4258" stroke-width="2.2"/>
    </svg>

    <div class="sw-main d-flex">
      <!-- property manager -->
      <div class="pm-panel flex-none">
        <div class="pm-tabs d-flex">
          <div class="pm-tab d-flex align-items-center justify-content-center"><svg width="20" height="20"><use href="#t-part"/></svg></div>
          <div class="pm-tab active d-flex align-items-center justify-content-center"><svg width="18" height="18"><use href="#t-prop"/></svg></div>
          <div class="pm-tab d-flex align-items-center justify-content-center"><svg width="18" height="18"><use href="#t-conf"/></svg></div>
          <div class="pm-tab d-flex align-items-center justify-content-center"><svg width="18" height="18"><use href="#t-dim"/></svg></div>
          <div class="pm-tab d-flex align-items-center justify-content-center"><svg width="18" height="18"><use href="#t-disp"/></svg></div>
        </div>
        <div class="pm-head d-flex align-items-center justify-content-between">
          <span class="d-flex align-items-center">
            <svg width="18" height="18" viewBox="0 0 18 18"><path d="M1 9 L9 1 L17 9 L9 17 Z" fill="#f5d21e" stroke="#fff"/><path d="M3 3 L15 15" stroke="#2a8a2a" stroke-width="1.5"/><path d="M8 6 L12 10" stroke="#555" stroke-width="2"/></svg>Plane
          </span>
          <span class="pm-help fw-bold">?</span>
        </div>
        <div class="pm-actions d-flex align-items-center">
          <svg width="17" height="17" viewBox="0 0 17 17"><path d="M1 9 L6 14 L16 3" fill="none" stroke="#11751a" stroke-width="3.4"/><path d="M1 9 L6 14 L16 3" fill="none" stroke="#5cd455" stroke-width="1.4"/></svg>
          <svg width="16" height="16" viewBox="0 0 16 16"><path d="M2 2 L14 14 M14 2 L2 14" stroke="#e02020" stroke-width="3.4"/></svg>
          <svg width="20" height="16" viewBox="0 0 20 16" class="ms-1"><path d="M0 8 H7" stroke="#444"/><path d="M7 5 H17 V11 H7 Z M15 3 H18 V13 H15 Z" fill="#e8e8ea" stroke="#555"/></svg>
        </div>
        <div class="pm-body d-flex position-relative">
          <div class="pm-col">
            <div class="pm-sec">
              <div class="pm-sec-h d-flex align-items-center justify-content-between"><span>Message</span><svg width="10" height="9"><use href="#p-up"/></svg></div>
              <div class="pm-msg d-flex align-items-center">Fully defined</div>
            </div>
            <div class="pm-sec">
              <div class="pm-sec-h d-flex align-items-center justify-content-between"><span>First Reference</span><svg width="10" height="9"><use href="#p-up"/></svg></div>
              <div class="sel-row d-flex align-items-center">
                <svg width="24" height="24"><use href="#p-sel"/></svg>
                <div class="sel-box d-flex align-items-center"><div class="sel-sw" style="background:#ff80c0"></div><span style="padding-left:1px">Face&lt;1&gt;</span></div>
              </div>
              <div class="opt-row d-flex align-items-center"><div class="sq-btn"><svg width="22" height="22"><use href="#p-par"/></svg></div>Parallel</div>
              <div class="opt-row d-flex align-items-center"><div class="sq-btn"><svg width="22" height="22"><use href="#p-perp"/></svg></div>Perpendicular</div>
              <div class="opt-row d-flex align-items-center"><div class="sq-btn"><svg width="22" height="22"><use href="#p-coin"/></svg></div>Coincident</div>
              <div class="opt-row d-flex align-items-center">
                <div class="sq-btn on"><svg width="22" height="22"><use href="#p-ang"/></svg></div>
                <div class="num-box"><span class="num-sel">45</span></div>
                <div class="spin"><b class="d-flex align-items-center"><svg width="14" height="6"><use href="#p-spin-up"/></svg></b><b class="d-flex align-items-center"><svg width="14" height="6"><use href="#p-spin-dn"/></svg></b></div>
              </div>
              <div class="flip-row d-flex align-items-center">
                <svg width="13" height="13" viewBox="0 0 13 13" class="me-1"><rect x=".5" y=".5" width="12" height="12" fill="#fff" stroke="#1f3f66"/><path d="M3 6 L5.5 9 L10 3" fill="none" stroke="#18a020" stroke-width="1.8"/></svg>Flip
              </div>
              <div class="opt-row d-flex align-items-center" style="height:22px">
                <svg width="19" height="18" viewBox="0 0 19 18" style="margin-left:30px"><g stroke="#333" stroke-width=".6"><circle cx="2" cy="15" r="1.8" fill="#e8d820"/><circle cx="6" cy="11" r="1.8" fill="#7ada50"/><circle cx="10" cy="7" r="1.8" fill="#7ada50"/><circle cx="14" cy="3" r="1.8" fill="#7ada50"/></g><text x="10" y="17" font-family="Liberation Sans" font-weight="700" font-size="9" fill="#111">#</text></svg>
                <div class="num-box" style="width:85px;border-color:#fff">1</div>
                <div class="spin"><b class="d-flex align-items-center"><svg width="14" height="6"><use href="#p-spin-up"/></svg></b><b class="d-flex align-items-center"><svg width="14" height="6"><use href="#p-spin-dn"/></svg></b></div>
              </div>
              <div class="opt-row d-flex align-items-center">
                <div class="sq-btn"><svg width="22" height="22"><use href="#p-dist"/></svg></div>
                <input class="num-box form-control shadow-none" value="0.100in" disabled>
                <div class="spin off"><b class="d-flex align-items-center"><svg width="14" height="6"><use href="#p-spin-up"/></svg></b><b class="d-flex align-items-center"><svg width="14" height="6"><use href="#p-spin-dn"/></svg></b></div>
              </div>
              <div class="opt-row d-flex align-items-center"><div class="sq-btn"><svg width="22" height="22"><use href="#p-mid"/></svg></div>Mid Plane</div>
            </div>
            <div class="pm-sec">
              <div class="pm-sec-h d-flex align-items-center justify-content-between"><span>Second Reference</span><svg width="10" height="9"><use href="#p-up"/></svg></div>
              <div class="sel-row d-flex align-items-center">
                <svg width="24" height="24"><use href="#p-sel"/></svg>
                <div class="sel-box d-flex align-items-center"><div class="sel-sw" style="background:#8000ff"></div><span style="padding-left:1px">Line1@Sketch11</span></div>
              </div>
              <div class="opt-row d-flex align-items-center"><div class="sq-btn"><svg width="22" height="22"><use href="#p-perp"/></svg></div>Perpendicular</div>
              <div class="opt-row d-flex align-items-center"><div class="sq-btn on"><svg width="22" height="22"><use href="#p-coin"/></svg></div>Coincident</div>
              <div class="opt-row d-flex align-items-center"><div class="sq-btn"><svg width="22" height="22"><use href="#p-proj"/></svg></div>Project</div>
            </div>
            <div class="pm-sec">
              <div class="pm-sec-h d-flex align-items-center justify-content-between"><span>Third Reference</span><svg width="10" height="9"><use href="#p-up"/></svg></div>
              <div class="sel-row d-flex align-items-center">
                <svg width="24" height="24"><use href="#p-sel"/></svg>
                <div class="sel-box on d-flex align-items-center"><div class="sel-sw" style="background:#12cc3a"></div></div>
              </div>
            </div>
          </div>
          <div class="pm-scroll position-relative">
            <i class="sc-a" style="top:6px;border-bottom:4px solid #9a9cab"></i>
            <div class="sc-thumb"><div class="sc-grip"></div></div>
            <i class="sc-a" style="top:520px;border-top:4px solid #6f7182"></i>
          </div>
        </div>
      </div>
      <div class="pm-split flex-none"></div>

      <!-- graphics area -->
      <div class="gfx flex-grow-1 position-relative">
        <svg class="gfx-svg" width="1177" height="629" viewBox="189 122 1177 629">
          <g class="mdl" transform="translate(500 130) scale(.3827 .3508)" stroke-linejoin="round">
            <!-- tray, back wall and floor -->
            <path d="M22,1048 L430,958 L420,1095 L80,1175 L85,1085 Z" fill="#555" stroke="#222"/>
            <path d="M45,1052 L430,966" stroke="#999" fill="none"/>
            <path d="M78,1175 L420,1095 L890,1355 L672,1405 L612,1380 L605,1510 L75,1220 Z" fill="#777" stroke="#222"/>
            <path d="M70,1222 L605,1510 L605,1524 L75,1236 Z" fill="#8a8a8a" stroke="#222"/>

            <!-- pegs behind the plate -->
            <ellipse cx="462" cy="295" rx="30" ry="54" fill="url(#gPeg)" stroke="#222"/>
            <path d="M490,248 L550,235 L548,272 Z" fill="#555" stroke="#222"/>
            <ellipse cx="420" cy="785" rx="30" ry="54" fill="url(#gPeg)" stroke="#222"/>

            <!-- lower flange -->
            <path d="M1195,1000 L1288,990 L1283,1040 L1268,1130 L1195,1140 Z" fill="#555" stroke="#222"/>
            <path d="M1175,1000 L1215,975 L1195,1140 L1167,1138 Z" fill="url(#gStrip)" stroke="#222"/>
            <path d="M1210,1030 Q1195,1060 1205,1105 L1280,1140 Q1320,1130 1325,1085 Q1320,1045 1285,1040 Z" fill="url(#gPeg)" stroke="#222"/>
            <ellipse cx="1290" cy="1088" rx="35" ry="50" transform="rotate(12 1290 1088)" fill="url(#gPeg)" stroke="#111" stroke-width="1.6"/>

            <!-- plate -->
            <path d="M560,135 L1137,450 Q1128,520 1130,590 Q1132,620 1150,630 L1207,665 L1167,1135 L1095,1100 Q1085,1098 1085,1115 L1052,1435 L420,1090 L490,250 L535,278 Q548,280 550,265 Z" fill="#c46090"/>

            <!-- front wall and tabs of the tray -->
            <path d="M680,1405 L1078,1312 L1070,1450 L672,1540 Z" fill="#555" stroke="#222"/>
            <path d="M1000,1330 L1062,1312" stroke="#aaa" fill="none"/>
            <path d="M672,1540 L1070,1450 L1068,1460 L672,1550 Z" fill="#8a8a8a" stroke="#222"/>
            <path d="M22,1055 L85,1085 L70,1220 L15,1185 Z" fill="#8c8c8c" stroke="#111"/>
            <path d="M612,1380 L680,1405 L672,1550 L660,1548 L605,1510 Z" fill="#8c8c8c" stroke="#111"/>
            <path d="M655,1405 L680,1405 L672,1550 L652,1542 Z" fill="url(#gStrip)" stroke="#111"/>

            <!-- reference plane -->
            <path d="M110,1020 L760,140 L1548,573 L898,1452 Z" fill="#5a96e1" fill-opacity=".55"/>

            <!-- what lies in front of the plane -->
            <path d="M1225,670 L1305,650 L1318,662 L1302,868 L1228,897 L1215,985 L1175,1000 Z" fill="#555" stroke="#222"/>
            <path d="M1207,665 L1228,672 L1215,985 L1175,1000 Z" fill="url(#gStrip)" stroke="#222"/>
            <path d="M1245,690 Q1225,720 1232,765 L1305,812 Q1350,800 1355,755 Q1350,715 1320,712 Z" fill="url(#gPeg)" stroke="#222"/>
            <ellipse cx="1320" cy="762" rx="35" ry="52" transform="rotate(12 1320 762)" fill="url(#gPeg)" stroke="#111" stroke-width="1.6"/>
            <path d="M560,135 L1137,450 Q1128,520 1130,590 Q1132,620 1150,630 L1207,665 L1167,1135 L1095,1100 Q1085,1098 1085,1115 L1052,1435 L420,1090 L490,250 L535,278 Q548,280 550,265 Z" fill="#c46090" clip-path="url(#clipUp)"/>
            <path d="M560,135 Q568,75 612,30 L1192,350 L1185,365 Q1145,400 1137,450 Z" fill="url(#gTop)" stroke="#222" stroke-width="1.2"/>

            <!-- outlines on top -->
            <path d="M490,250 L462,600 M1137,450 Q1128,520 1130,590 Q1132,620 1150,630" fill="none" stroke="#222" stroke-width="3"/>
            <path d="M560,135 L1137,450 Q1128,520 1130,590 Q1132,620 1150,630 L1207,665 L1167,1135 L1095,1100 Q1085,1098 1085,1115 L1052,1435 L420,1090 L490,250 L535,278 Q548,280 550,265 Z" fill="none" stroke="#ff80c0" stroke-width="1.4"/>
            <path d="M110,1020 L760,140 L1548,573 L898,1452 Z" fill="none" stroke="#1c78d8" stroke-width="1"/>
            <path d="M578,674 L950,879" stroke="#8000ff" stroke-width="2"/>
            <path d="M712,508 H732 M722,497 V519" stroke="#ff80c0" stroke-width="1"/>
          </g>
          <rect x="718.5" y="363.5" width="6" height="6" fill="#8000ff" stroke="#000"/>
          <rect x="860.5" y="434.5" width="6" height="6" fill="#8000ff" stroke="#000"/>

          <!-- triad -->
          <g stroke-linejoin="round">
            <path d="M231 693 V675" stroke="#1f6a1f" stroke-width="3"/>
            <path d="M231 666 L235 676 H227 Z" fill="#2a9a2a"/>
            <path d="M231 693 L247 689" stroke="#8c1c1c" stroke-width="4"/>
            <path d="M254 688 L245 684 L247 692 Z" fill="#a82020"/>
            <path d="M231 693 L244 700" stroke="#16169a" stroke-width="4"/>
            <path d="M250 703 L241 704 L245 696 Z" fill="#1c1cc0"/>
            <path d="M228 656 L231 660 L234 656 M231 660 V664" stroke="#2a9a2a" fill="none"/>
            <path d="M253 683 L258 690 M258 683 L253 690" stroke="#e02020" fill="none"/>
            <path d="M246 702 H252 L246 707 H252" stroke="#2020e0" fill="none"/>
          </g>

          <!-- ghost OK / cancel corner -->
          <path d="M1269 148 L1277 156 L1290 141" fill="none" stroke="#a5c8a5" stroke-width="4"/>
          <path d="M1303 169 L1322 188 M1322 169 L1303 188" stroke="#d9a5a5" stroke-width="4"/>
        </svg>

        <div class="tree-row d-flex align-items-center">
          <i class="plus-box"></i>
          <svg width="17" height="17" class="me-1"><use href="#t-part"/></svg>
          <span class="tree-txt text-nowrap">Bat Tray&nbsp; (Default&lt;&lt;Default...</span>
        </div>

        <div class="task-tabs">
          <div class="task-tab d-flex align-items-center justify-content-center"><svg width="17" height="17" viewBox="0 0 17 17"><path d="M1 9 L8.5 2 L16 9" fill="#d8471f" stroke="#703010"/><path d="M3 8 V16 H14 V8 L8.5 3 Z" fill="#f5d44a" stroke="#705010"/><rect x="7" y="10" width="3" height="6" fill="#a8660f"/></svg></div>
          <div class="task-tab d-flex align-items-center justify-content-center"><svg width="17" height="17" viewBox="0 0 17 17"><rect x="1" y="7" width="4" height="8" fill="#28a02c" stroke="#111"/><rect x="6" y="4" width="4" height="11" fill="#111" stroke="#111"/><rect x="11" y="2" width="5" height="13" fill="#f5b81e" stroke="#111"/><rect x="6" y="8" width="4" height="7" fill="#2a6ae0"/></svg></div>
          <div class="task-tab d-flex align-items-center justify-content-center"><svg width="17" height="15" viewBox="0 0 17 15"><path d="M1 2 H6 L8 4 H14 V6 H4 L1 13 Z" fill="#f8d860" stroke="#a87808"/><path d="M4 6 H16 L13 14 H1 Z" fill="#f8e088" stroke="#a87808"/></svg></div>
          <div class="task-tab d-flex align-items-center justify-content-center"><svg width="17" height="17" viewBox="0 0 17 17"><rect x="1" y="1" width="15" height="10" fill="#fff" stroke="#203880"/><path d="M3 4 H7 M10 4 H14 M3 8 H7 M10 8 H14" stroke="#203880" stroke-width="1.5"/><path d="M2 14 H8 M6 12 L9 14 L6 16 Z" stroke="#1010d0" fill="#1010d0"/></svg></div>
          <div class="task-tab active d-flex align-items-center justify-content-center"><svg width="16" height="16"><use href="#t-disp"/></svg></div>
          <div class="task-tab d-flex align-items-center justify-content-center"><svg width="17" height="17"><use href="#t-prop"/></svg></div>
        </div>
      </div>
    </div>
    <div class="split-tab">◂<br>◂<br>◂</div>
  </div>

  <!-- model / motion study tabs -->
  <div class="sw-bottom d-flex">
    <div class="nav-arrows d-flex">
      <span class="d-flex align-items-center justify-content-center"><svg width="8" height="8" viewBox="0 0 8 8"><path d="M1 0 V8 M7 0 L2 4 L7 8 Z" fill="#8f92a8" stroke="#8f92a8"/></svg></span>
      <span class="d-flex align-items-center justify-content-center"><svg width="8" height="8" viewBox="0 0 8 8"><path d="M7 0 L2 4 L7 8 Z" fill="#8f92a8"/></svg></span>
      <span class="d-flex align-items-center justify-content-center"><svg width="8" height="8" viewBox="0 0 8 8"><path d="M1 0 L6 4 L1 8 Z" fill="#8f92a8"/></svg></span>
      <span class="d-flex align-items-center justify-content-center"><svg width="8" height="8" viewBox="0 0 8 8"><path d="M7 0 V8 M1 0 L6 4 L1 8 Z" fill="#8f92a8" stroke="#8f92a8"/></svg></span>
    </div>
    <div class="bt-tab active">Model</div>
    <div class="bt-tab off">Motion Study 1</div>
  </div>
</div>

<script src="https://cdn.jsdelivr.net/npm/bootstrap@5.3.3/dist/js/bootstrap.bundle.min.js"></script>
</body>
</html>
